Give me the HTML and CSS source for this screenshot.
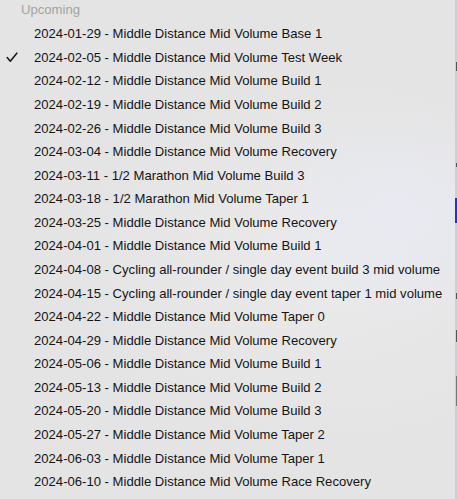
FILE: index.html
```html
<!DOCTYPE html>
<html>
<head>
<meta charset="utf-8">
<link rel="stylesheet" href="styles.css">
</head>
<body>
<div class="screen">
  <div class="menu">
    <div class="header">Upcoming</div>
    <ul class="items">
      <li class="item">2024-01-29 - Middle Distance Mid Volume Base 1</li>
      <li class="item checked"><svg class="check" width="12" height="11" viewBox="0 0 12 11"><path d="M1.2 5.6 L4.3 9.2 L10.8 1.2" fill="none" stroke="#1a1a1a" stroke-width="1.6" stroke-linecap="round" stroke-linejoin="round"/></svg>2024-02-05 - Middle Distance Mid Volume Test Week</li>
      <li class="item">2024-02-12 - Middle Distance Mid Volume Build 1</li>
      <li class="item">2024-02-19 - Middle Distance Mid Volume Build 2</li>
      <li class="item">2024-02-26 - Middle Distance Mid Volume Build 3</li>
      <li class="item">2024-03-04 - Middle Distance Mid Volume Recovery</li>
      <li class="item">2024-03-11 - 1/2 Marathon Mid Volume Build 3</li>
      <li class="item">2024-03-18 - 1/2 Marathon Mid Volume Taper 1</li>
      <li class="item">2024-03-25 - Middle Distance Mid Volume Recovery</li>
      <li class="item">2024-04-01 - Middle Distance Mid Volume Build 1</li>
      <li class="item">2024-04-08 - Cycling all-rounder / single day event build 3 mid volume</li>
      <li class="item">2024-04-15 - Cycling all-rounder / single day event taper 1 mid volume</li>
      <li class="item">2024-04-22 - Middle Distance Mid Volume Taper 0</li>
      <li class="item">2024-04-29 - Middle Distance Mid Volume Recovery</li>
      <li class="item">2024-05-06 - Middle Distance Mid Volume Build 1</li>
      <li class="item">2024-05-13 - Middle Distance Mid Volume Build 2</li>
      <li class="item">2024-05-20 - Middle Distance Mid Volume Build 3</li>
      <li class="item">2024-05-27 - Middle Distance Mid Volume Taper 2</li>
      <li class="item">2024-06-03 - Middle Distance Mid Volume Taper 1</li>
      <li class="item">2024-06-10 - Middle Distance Mid Volume Race Recovery</li>
    </ul>
  </div>
  <div class="edge">
    <span class="mark m1"></span>
    <span class="mark m2"></span>
    <span class="blue"></span>
    <span class="mark m3"></span>
    <span class="mark m4"></span>
    <span class="mark m5"></span>
  </div>
</div>
</body>
</html>
```
FILE: styles.css
```css
html, body {
  margin: 0;
  padding: 0;
}
body {
  width: 457px;
  height: 499px;
  overflow: hidden;
  background: #e4e4e4;
}
.screen {
  display: flex;
  width: 457px;
  height: 499px;
}
.menu {
  flex: 0 0 455px;
  height: 499px;
  background:
    radial-gradient(ellipse 150px 110px at 400px 215px, rgba(232, 234, 242, 0.95), rgba(232, 234, 242, 0) 100%),
    radial-gradient(ellipse 260px 180px at 330px 260px, rgba(236, 236, 238, 0.8), rgba(236, 236, 238, 0) 100%),
    #e4e4e4;
  font-family: "Liberation Sans", Arial, sans-serif;
  font-size: 13.1px;
  color: #141414;
}
.header {
  height: 20px;
  line-height: 20px;
  padding-left: 21px;
  margin-bottom: 2.2px;
  color: #a3a3a3;
}
.items {
  list-style: none;
  margin: 0;
  padding: 0;
}
.item {
  position: relative;
  height: 23.58px;
  line-height: 23.58px;
  padding-left: 34px;
  white-space: nowrap;
}
.check {
  position: absolute;
  left: 6px;
  top: 6.5px;
}
.edge {
  position: relative;
  flex: 0 0 2px;
  height: 499px;
  background: #cfcfd2;
}
.mark {
  position: absolute;
  left: 1px;
  width: 1px;
  background: #555;
}
.m1 { top: 62px; height: 9px; }
.m2 { top: 163px; height: 4px; }
.m3 { top: 293px; height: 6px; }
.m4 { top: 330px; height: 12px; }
.m5 { top: 376px; height: 30px; background: #777; }
.blue {
  position: absolute;
  left: 0;
  top: 198px;
  width: 2px;
  height: 25px;
  background: #2a2fd0;
}
```
